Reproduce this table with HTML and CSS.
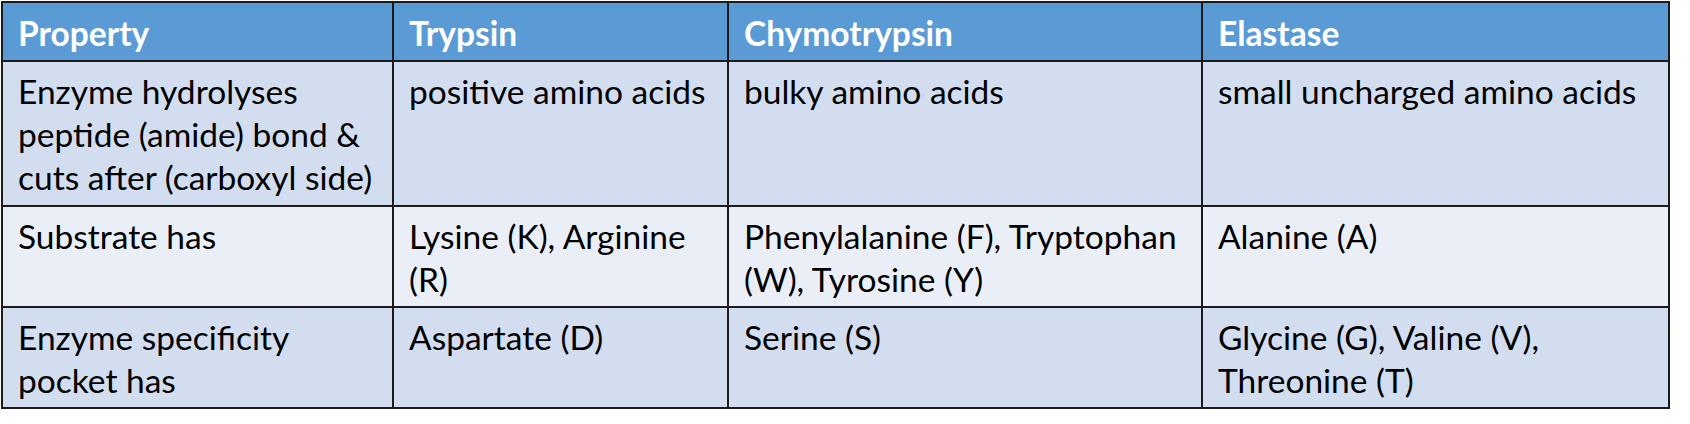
FILE: index.html
```html
<!DOCTYPE html>
<html lang="en">
<head>
<meta charset="utf-8">
<title>Serine proteases</title>
<link rel="stylesheet" href="styles.css">
</head>
<body>
<table class="grid">
  <colgroup>
    <col class="c1"><col class="c2"><col class="c3"><col class="c4">
  </colgroup>
  <thead>
    <tr class="head">
      <th>Property</th><th>Trypsin</th><th>Chymotrypsin</th><th>Elastase</th>
    </tr>
  </thead>
  <tbody>
    <tr class="r1 band">
      <td>Enzyme hydrolyses peptide (amide) bond &amp; cuts after (carboxyl side)</td>
      <td>positive amino acids</td>
      <td>bulky amino acids</td>
      <td>small uncharged amino acids</td>
    </tr>
    <tr class="r2 light">
      <td>Substrate has</td>
      <td>Lysine (K), Arginine (R)</td>
      <td>Phenylalanine (F), Tryptophan (W), Tyrosine (Y)</td>
      <td>Alanine (A)</td>
    </tr>
    <tr class="r3 band">
      <td>Enzyme specificity pocket has</td>
      <td>Aspartate (D)</td>
      <td>Serine (S)</td>
      <td>Glycine (G), Valine (V), Threonine (T)</td>
    </tr>
  </tbody>
</table>
</body>
</html>
```
FILE: styles.css
```css
html, body {
  margin: 0;
  padding: 0;
  background: #ffffff;
}
body {
  padding: 1px 0 0 1px;
  font-family: Lato, "Open Sans", sans-serif;
}
.grid {
  border-collapse: separate;
  border-spacing: 0;
  table-layout: fixed;
  width: 1669px;
  border-left: 2px solid #1b1b1b;
  border-top: 2px solid #1b1b1b;
}
.c1 { width: 391px; }
.c2 { width: 335px; }
.c3 { width: 474px; }
.c4 { width: 467px; }
.grid th,
.grid td {
  box-sizing: border-box;
  border-right: 2px solid #1b1b1b;
  border-bottom: 2px solid #1b1b1b;
  padding: 8px 12px 0 15px;
  vertical-align: top;
  text-align: left;
  font-size: 33.5px;
  line-height: 43px;
  color: #000000;
}
.grid th {
  padding-top: 9px;
  font-weight: 700;
  color: #ffffff;
  background: #5b9bd5;
}
.head { height: 59px; }
.r1 { height: 145px; }
.r2 { height: 101px; }
.r3 { height: 101px; }
.band td { background: #d2deef; }
.light td { background: #eaeff7; }
```
